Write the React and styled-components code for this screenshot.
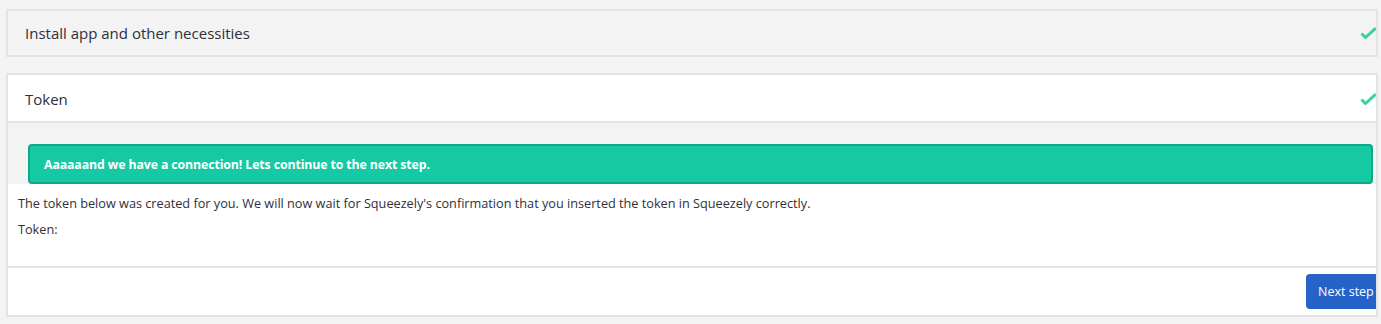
import React from "react";
import styled, { createGlobalStyle } from "styled-components";

const Global = createGlobalStyle`
  html, body { margin: 0; padding: 0; }
  body {
    background: #f3f3f3;
    font-family: "Open Sans", "Noto Sans", Arial, sans-serif;
    color: #2f2f3a;
  }
`;

const Page = styled.div`
  padding: 9px 3px 0 6px;
  display: flex;
  flex-direction: column;
  gap: 16px;
`;

const Card = styled.section`
  border: 2px solid #e3e3e3;
  background: ${(p) => (p.$active ? "#ffffff" : "#f3f3f3")};
  overflow: hidden;
`;

const Header = styled.div`
  height: ${(p) => (p.$active ? "46px" : "44px")};
  box-sizing: border-box;
  padding-top: ${(p) => (p.$active ? "2px" : "0")};
  display: flex;
  align-items: center;
  justify-content: space-between;
  padding-left: 17px;
  font-size: 15px;
  color: #2f2f3a;
  ${(p) => p.$active && "border-bottom: 2px solid #e3e3e3; height: 48px;"}
`;

const Check = styled.svg`
  width: 17px;
  height: 13px;
  margin-right: -1px;
  flex: none;
`;

const AlertZone = styled.div`
  background: #f3f3f3;
  padding: 21px 3px 0 20px;
`;

const Alert = styled.div`
  height: 36px;
  background: #16c9a5;
  border: 2px solid #10a886;
  border-radius: 4px;
  display: flex;
  align-items: center;
  padding-left: 14px;
  color: #ffffff;
  font-weight: 700;
  font-size: 12.3px;
  letter-spacing: -0.1px;
`;

const Body = styled.div`
  padding: 10px 10px 0 10px;
  height: 72px;
  border-bottom: 2px solid #e3e3e3;
  font-size: 12.7px;
  color: #2f2f3a;
`;

const Para = styled.p`
  margin: 0 0 8px 0;
  line-height: 18px;
`;

const Footer = styled.div`
  height: 47px;
  display: flex;
  justify-content: flex-end;
  align-items: flex-start;
  padding-top: 6px;
  box-sizing: border-box;
`;

const Button = styled.button`
  height: 35px;
  width: 72px;
  margin-right: -2px;
  border: none;
  border-radius: 4px 0 0 4px;
  background: #2563c9;
  color: #ffffff;
  font-family: inherit;
  font-size: 12.5px;
  text-align: left;
  padding: 0 0 0 12px;
  white-space: nowrap;
`;

const CheckIcon = () => (
  <Check viewBox="0 0 17 13">
    <path d="M1.5 6.5 L5.5 10.5 L15.8 1.2" fill="none" stroke="#3ccfa6" strokeWidth="3" strokeLinecap="butt" strokeLinejoin="miter" />
  </Check>
);

export default function App() {
  return (
    <>
      <Global />
      <Page>
        <Card>
          <Header>
            <span>Install app and other necessities</span>
            <CheckIcon />
          </Header>
        </Card>
        <Card $active>
          <Header $active>
            <span>Token</span>
            <CheckIcon />
          </Header>
          <AlertZone>
            <Alert>Aaaaaand we have a connection! Lets continue to the next step.</Alert>
          </AlertZone>
          <Body>
            <Para>
              The token below was created for you. We will now wait for Squeezely's confirmation that you inserted the token in Squeezely correctly.
            </Para>
            <Para>Token:</Para>
          </Body>
          <Footer>
            <Button>Next step</Button>
          </Footer>
        </Card>
      </Page>
    </>
  );
}
